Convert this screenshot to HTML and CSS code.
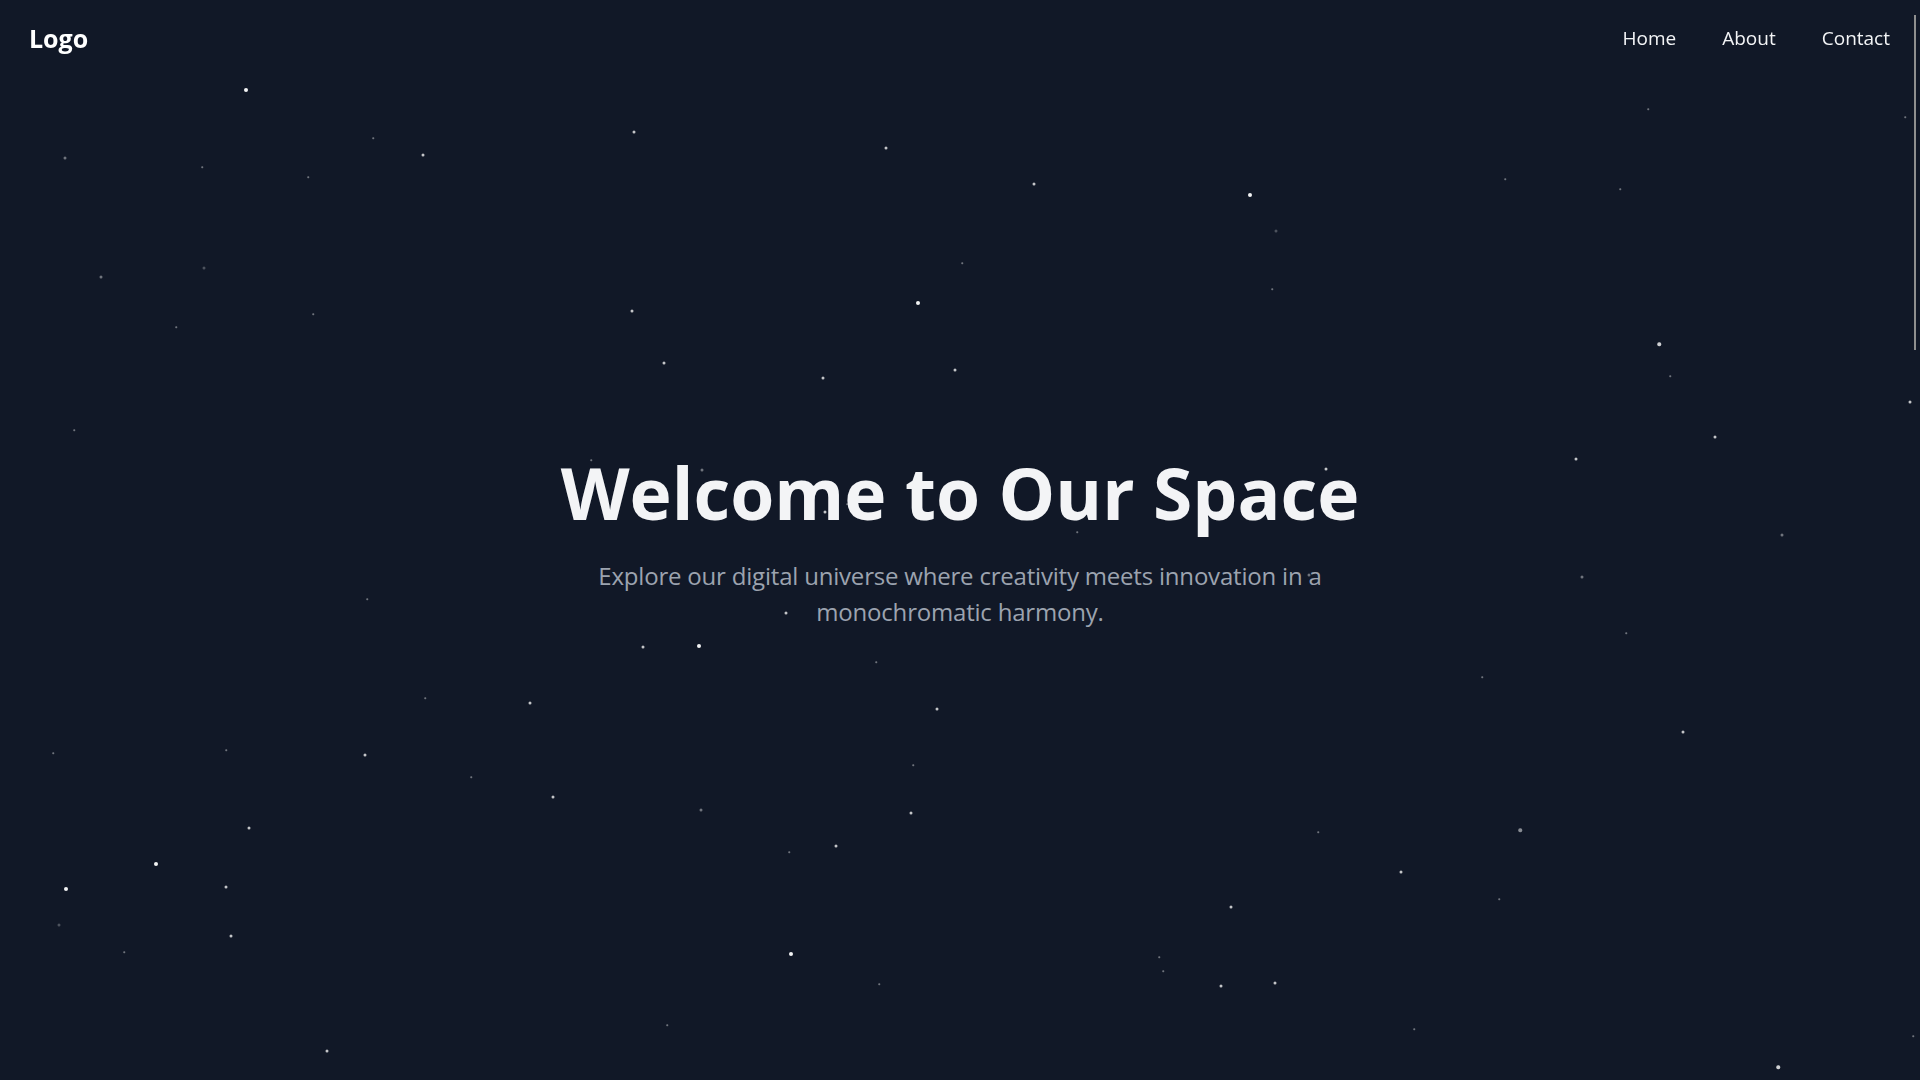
FILE: index.html
```html
<!DOCTYPE html>
<html lang="en">
<head>
<meta charset="utf-8">
<title>Welcome to Our Space</title>
<link rel="stylesheet" href="styles.css">
</head>
<body>
<div class="scroll-thumb" aria-hidden="true"></div>
<header class="site-header">
  <a class="logo" href="#">Logo</a>
  <nav class="nav">
    <a href="#">Home</a>
    <a href="#">About</a>
    <a href="#">Contact</a>
  </nav>
</header>
<main class="hero">
  <div class="stars" aria-hidden="true">
    <span class="star lg" style="left:246px;top:90px"></span>
    <span class="star dim" style="left:65px;top:158px"></span>
    <span class="star tiny" style="left:373px;top:138px"></span>
    <span class="star md" style="left:423px;top:155px"></span>
    <span class="star tiny" style="left:308px;top:177px"></span>
    <span class="star md" style="left:634px;top:132px"></span>
    <span class="star md" style="left:886px;top:148px"></span>
    <span class="star tiny" style="left:202px;top:167px"></span>
    <span class="star dim" style="left:101px;top:277px"></span>
    <span class="star dim faint" style="left:204px;top:268px"></span>
    <span class="star tiny" style="left:313px;top:314px"></span>
    <span class="star tiny" style="left:176px;top:327px"></span>
    <span class="star md" style="left:632px;top:311px"></span>
    <span class="star lg" style="left:918px;top:303px"></span>
    <span class="star md" style="left:664px;top:363px"></span>
    <span class="star md" style="left:823px;top:378px"></span>
    <span class="star md" style="left:955px;top:370px"></span>
    <span class="star tiny" style="left:74px;top:430px"></span>
    <span class="star tiny" style="left:591px;top:460px"></span>
    <span class="star dim" style="left:702px;top:470px"></span>
    <span class="star md" style="left:825px;top:512px"></span>
    <span class="star tiny" style="left:847px;top:504px"></span>
    <span class="star md" style="left:1034px;top:184px"></span>
    <span class="star lg" style="left:1250px;top:195px"></span>
    <span class="star dim faint" style="left:1276px;top:231px"></span>
    <span class="star tiny" style="left:962px;top:263px"></span>
    <span class="star tiny" style="left:1505px;top:179px"></span>
    <span class="star tiny" style="left:1620px;top:189px"></span>
    <span class="star tiny" style="left:1648px;top:109px"></span>
    <span class="star md bright" style="left:1659px;top:344px"></span>
    <span class="star tiny" style="left:1670px;top:376px"></span>
    <span class="star md" style="left:1910px;top:402px"></span>
    <span class="star md" style="left:1715px;top:437px"></span>
    <span class="star md" style="left:1576px;top:459px"></span>
    <span class="star md" style="left:1326px;top:469px"></span>
    <span class="star tiny" style="left:1077px;top:532px"></span>
    <span class="star dim" style="left:1782px;top:535px"></span>
    <span class="star tiny" style="left:1272px;top:289px"></span>
    <span class="star tiny" style="left:1905px;top:117px"></span>
    <span class="star md" style="left:786px;top:613px"></span>
    <span class="star md" style="left:643px;top:647px"></span>
    <span class="star lg" style="left:699px;top:646px"></span>
    <span class="star tiny" style="left:876px;top:662px"></span>
    <span class="star tiny" style="left:367px;top:599px"></span>
    <span class="star md" style="left:530px;top:703px"></span>
    <span class="star tiny" style="left:425px;top:698px"></span>
    <span class="star md" style="left:937px;top:709px"></span>
    <span class="star md" style="left:365px;top:755px"></span>
    <span class="star tiny" style="left:226px;top:750px"></span>
    <span class="star tiny" style="left:53px;top:753px"></span>
    <span class="star tiny" style="left:471px;top:777px"></span>
    <span class="star md" style="left:553px;top:797px"></span>
    <span class="star dim" style="left:701px;top:810px"></span>
    <span class="star md" style="left:911px;top:813px"></span>
    <span class="star tiny" style="left:913px;top:765px"></span>
    <span class="star md" style="left:249px;top:828px"></span>
    <span class="star md" style="left:836px;top:846px"></span>
    <span class="star tiny" style="left:789px;top:852px"></span>
    <span class="star lg" style="left:156px;top:864px"></span>
    <span class="star lg" style="left:66px;top:889px"></span>
    <span class="star md" style="left:226px;top:887px"></span>
    <span class="star dim faint" style="left:59px;top:925px"></span>
    <span class="star md" style="left:231px;top:936px"></span>
    <span class="star tiny" style="left:124px;top:952px"></span>
    <span class="star lg" style="left:791px;top:954px"></span>
    <span class="star tiny" style="left:879px;top:984px"></span>
    <span class="star tiny" style="left:667px;top:1025px"></span>
    <span class="star md" style="left:327px;top:1051px"></span>
    <span class="star dim" style="left:1309px;top:575px"></span>
    <span class="star dim" style="left:1582px;top:577px"></span>
    <span class="star tiny" style="left:1626px;top:633px"></span>
    <span class="star tiny" style="left:1482px;top:677px"></span>
    <span class="star md" style="left:1683px;top:732px"></span>
    <span class="star dim big" style="left:1520px;top:830px"></span>
    <span class="star tiny" style="left:1318px;top:832px"></span>
    <span class="star md" style="left:1401px;top:872px"></span>
    <span class="star tiny" style="left:1499px;top:899px"></span>
    <span class="star md" style="left:1231px;top:907px"></span>
    <span class="star tiny" style="left:1159px;top:957px"></span>
    <span class="star tiny" style="left:1163px;top:971px"></span>
    <span class="star md" style="left:1221px;top:986px"></span>
    <span class="star md" style="left:1275px;top:983px"></span>
    <span class="star tiny" style="left:1414px;top:1029px"></span>
    <span class="star md bright" style="left:1778px;top:1067px"></span>
    <span class="star tiny" style="left:1913px;top:1036px"></span>
  </div>
  <div class="hero-content">
    <h1 class="hero-title">Welcome to Our Space</h1>
    <p class="hero-text">Explore our digital universe where creativity meets innovation in a monochromatic harmony.</p>
  </div>
</main>
</body>
</html>
```
FILE: styles.css
```css
* {
  box-sizing: border-box;
}

html,
body {
  margin: 0;
  padding: 0;
  height: 100%;
}

body {
  background: #111827;
  color: #f3f4f6;
  font-family: "Open Sans", "Noto Sans", "Liberation Sans", sans-serif;
  overflow: hidden;
}

a {
  color: inherit;
  text-decoration: none;
}

.scroll-thumb {
  position: fixed;
  top: 15px;
  right: 4px;
  width: 2px;
  height: 335px;
  background: #8f8f8f;
  z-index: 20;
}

.site-header {
  position: fixed;
  top: 0;
  left: 0;
  right: 0;
  height: 76px;
  padding: 0 30px 0 29px;
  display: flex;
  align-items: center;
  justify-content: space-between;
  z-index: 10;
}

.logo {
  font-size: 25px;
  font-weight: 700;
  color: #ffffff;
}

.nav {
  display: flex;
  align-items: center;
  gap: 46px;
}

.nav a {
  font-size: 19px;
  color: #f3f4f6;
}

.hero {
  position: relative;
  min-height: 100vh;
  display: flex;
  flex-direction: column;
  align-items: center;
  justify-content: center;
  overflow: hidden;
}

.stars {
  position: absolute;
  inset: 0;
}

.star {
  position: absolute;
  display: block;
  border-radius: 50%;
  background: #ffffff;
  transform: translate(-50%, -50%);
}

.star.lg {
  width: 4px;
  height: 4px;
  opacity: 0.95;
}

.star.md {
  width: 3px;
  height: 3px;
  opacity: 0.75;
}

.star.md.bright {
  width: 3.5px;
  height: 3.5px;
  opacity: 0.8;
}

.star.dim {
  width: 3px;
  height: 3px;
  opacity: 0.4;
}

.star.dim.big {
  width: 3.5px;
  height: 3.5px;
  opacity: 0.5;
}

.star.dim.faint {
  opacity: 0.25;
}

.star.tiny {
  width: 1.5px;
  height: 1.5px;
  opacity: 0.4;
}

.hero-content {
  position: relative;
  display: flex;
  flex-direction: column;
  align-items: center;
  text-align: center;
  padding: 0 24px;
}

.hero-title {
  margin: 0 0 22px;
  font-size: 71.3px;
  line-height: 1.2;
  font-weight: 700;
  color: #f3f4f6;
}

.hero-text {
  margin: 0;
  max-width: 768px;
  font-size: 24px;
  line-height: 36px;
  letter-spacing: -0.2px;
  color: #9ca3af;
}
```
